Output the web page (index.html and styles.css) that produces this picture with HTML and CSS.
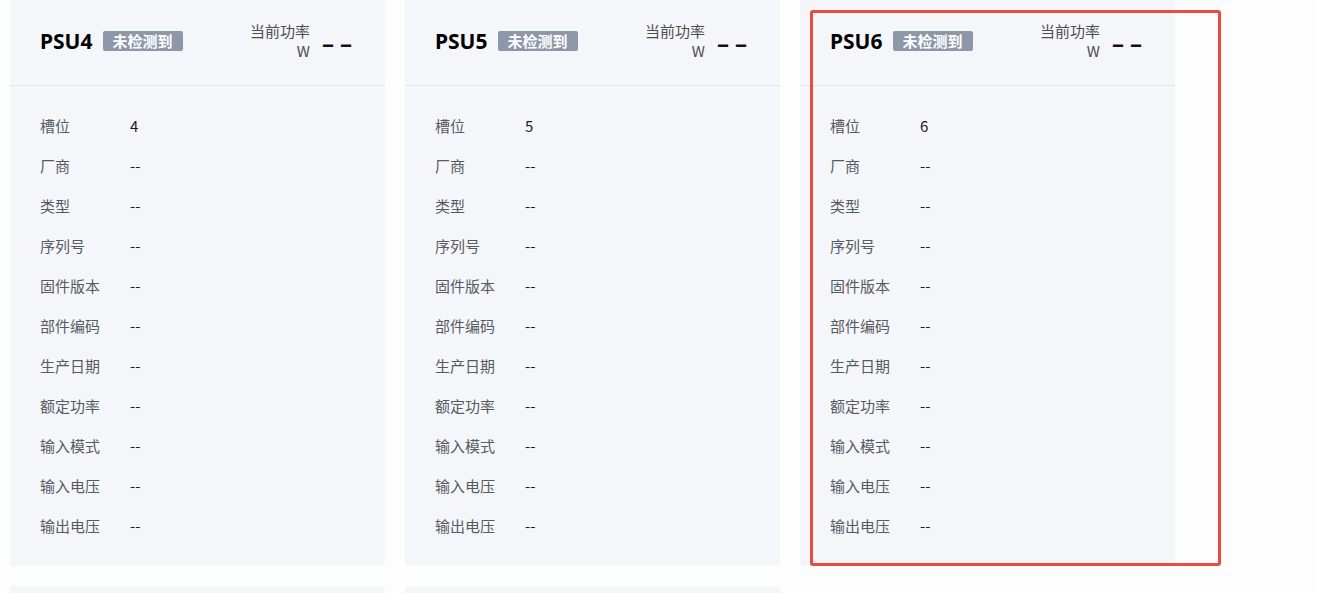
FILE: index.html
```html
<!DOCTYPE html>
<html lang="zh">
<head>
<meta charset="utf-8">
<title>PSU</title>
<link rel="stylesheet" href="styles.css">
</head>
<body>
<div class="page">
  <div class="grid">
    <div class="card">
      <div class="card-head">
        <div class="title-group"><span class="title">PSU4</span><span class="badge">未检测到</span></div>
        <div class="power"><div class="power-label"><span>当前功率</span><span>W</span></div><span class="power-value">––</span></div>
      </div>
      <div class="card-body">
        <div class="row"><span class="label">槽位</span><span class="value">4</span></div>
        <div class="row"><span class="label">厂商</span><span class="value">--</span></div>
        <div class="row"><span class="label">类型</span><span class="value">--</span></div>
        <div class="row"><span class="label">序列号</span><span class="value">--</span></div>
        <div class="row"><span class="label">固件版本</span><span class="value">--</span></div>
        <div class="row"><span class="label">部件编码</span><span class="value">--</span></div>
        <div class="row"><span class="label">生产日期</span><span class="value">--</span></div>
        <div class="row"><span class="label">额定功率</span><span class="value">--</span></div>
        <div class="row"><span class="label">输入模式</span><span class="value">--</span></div>
        <div class="row"><span class="label">输入电压</span><span class="value">--</span></div>
        <div class="row"><span class="label">输出电压</span><span class="value">--</span></div>
      </div>
    </div>
    <div class="card">
      <div class="card-head">
        <div class="title-group"><span class="title">PSU5</span><span class="badge">未检测到</span></div>
        <div class="power"><div class="power-label"><span>当前功率</span><span>W</span></div><span class="power-value">––</span></div>
      </div>
      <div class="card-body">
        <div class="row"><span class="label">槽位</span><span class="value">5</span></div>
        <div class="row"><span class="label">厂商</span><span class="value">--</span></div>
        <div class="row"><span class="label">类型</span><span class="value">--</span></div>
        <div class="row"><span class="label">序列号</span><span class="value">--</span></div>
        <div class="row"><span class="label">固件版本</span><span class="value">--</span></div>
        <div class="row"><span class="label">部件编码</span><span class="value">--</span></div>
        <div class="row"><span class="label">生产日期</span><span class="value">--</span></div>
        <div class="row"><span class="label">额定功率</span><span class="value">--</span></div>
        <div class="row"><span class="label">输入模式</span><span class="value">--</span></div>
        <div class="row"><span class="label">输入电压</span><span class="value">--</span></div>
        <div class="row"><span class="label">输出电压</span><span class="value">--</span></div>
      </div>
    </div>
    <div class="card">
      <div class="card-head">
        <div class="title-group"><span class="title">PSU6</span><span class="badge">未检测到</span></div>
        <div class="power"><div class="power-label"><span>当前功率</span><span>W</span></div><span class="power-value">––</span></div>
      </div>
      <div class="card-body">
        <div class="row"><span class="label">槽位</span><span class="value">6</span></div>
        <div class="row"><span class="label">厂商</span><span class="value">--</span></div>
        <div class="row"><span class="label">类型</span><span class="value">--</span></div>
        <div class="row"><span class="label">序列号</span><span class="value">--</span></div>
        <div class="row"><span class="label">固件版本</span><span class="value">--</span></div>
        <div class="row"><span class="label">部件编码</span><span class="value">--</span></div>
        <div class="row"><span class="label">生产日期</span><span class="value">--</span></div>
        <div class="row"><span class="label">额定功率</span><span class="value">--</span></div>
        <div class="row"><span class="label">输入模式</span><span class="value">--</span></div>
        <div class="row"><span class="label">输入电压</span><span class="value">--</span></div>
        <div class="row"><span class="label">输出电压</span><span class="value">--</span></div>
      </div>
    </div>
    <div class="card card-next"></div>
    <div class="card card-next"></div>
  </div>
  <div class="highlight"></div>
</div>
</body>
</html>
```
FILE: styles.css
```css
* { box-sizing: border-box; }
html, body { margin: 0; padding: 0; }
body {
  background: #fdfdfe;
  font-family: "Noto Sans CJK SC", "Noto Sans", sans-serif;
  font-size: 15px;
  color: #1a1a1a;
  overflow: hidden;
  height: 593px;
}
.page { position: relative; height: 593px; overflow: hidden; }
.grid {
  display: grid;
  grid-template-columns: repeat(3, 375px);
  column-gap: 20px;
  row-gap: 20px;
  padding-left: 10px;
  margin-top: -10px;
}
.card {
  background: #f5f6f9;
  border-radius: 4px;
}
.card-next { height: 200px; }
.card-head {
  height: 96px;
  padding: 7px 33px 0 30px;
  display: flex;
  align-items: center;
  justify-content: space-between;
  border-bottom: 1px solid #e4e5ec;
}
.title-group { display: flex; align-items: center; }
.title {
  font-family: "Noto Sans", "Noto Sans CJK SC", sans-serif;
  font-weight: 700;
  font-size: 21px;
  color: #000;
  line-height: 28px;
}
.badge {
  margin-left: 10px;
  background: #8e97a8;
  color: #fff;
  font-weight: 700;
  font-size: 15px;
  line-height: 20px;
  height: 20px;
  padding: 0 10px;
  border-radius: 2px;
}
.power { display: flex; align-items: center; }
.power-label {
  display: flex;
  flex-direction: column;
  align-items: flex-end;
  font-size: 15px;
  line-height: 20px;
  color: #4d4d4d;
}
.power-value {
  margin-left: 12px;
  font-family: "Noto Sans", sans-serif;
  font-weight: 700;
  font-size: 24px;
  letter-spacing: 6px;
  margin-right: -6px;
  color: #111;
  line-height: 30px;
  padding-top: 4px;
}
.card-body { padding: 20px 30px 20px; }
.row { display: flex; height: 40px; line-height: 40px; }
.label { width: 90px; color: #555a63; }
.value { color: #1a1a1a; }
.highlight {
  position: absolute;
  left: 810px;
  top: 10px;
  width: 411px;
  height: 556px;
  border: 3px solid #ec4a3e;
  border-radius: 3px;
  pointer-events: none;
}
```
